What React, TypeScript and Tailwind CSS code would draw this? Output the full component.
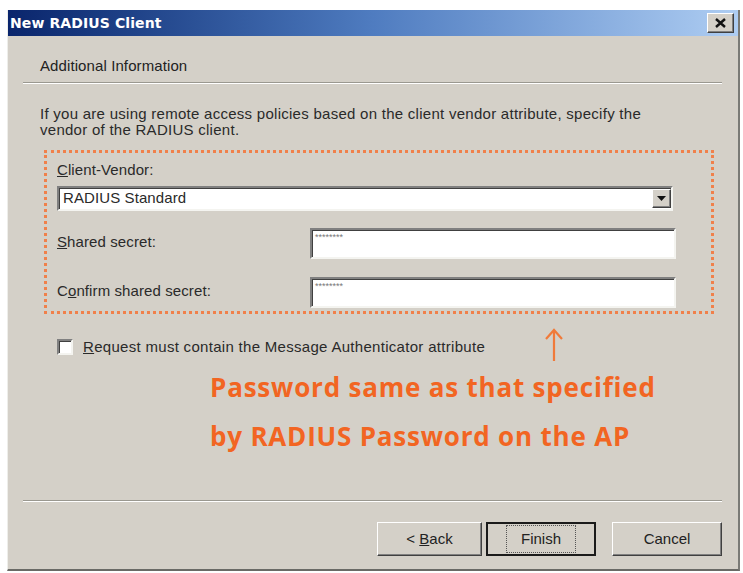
import { useState } from "react";

const sunken =
  "border-2 border-t-[#808080] border-l-[#808080] border-b-[#f4f4f0] border-r-[#f4f4f0] shadow-[inset_1px_1px_0_#404040]";

const raised =
  "border border-t-[#ffffff] border-l-[#ffffff] border-b-[#404040] border-r-[#404040] shadow-[inset_-1px_-1px_0_#808080]";

function Separator({ className = "" }: { className?: string }) {
  return <div className={`h-[2px] border-t border-t-[#9a9890] border-b border-b-[#ffffff] ${className}`} />;
}

function Button({ label, width, focused }: { label: React.ReactNode; width: string; focused?: boolean }) {
  return (
    <button
      className={`${width} h-[34px] bg-[#d4d0c8] text-[15px] text-[#222] ${
        focused ? "border-2 border-[#1a1a1a]" : raised
      } flex items-center justify-center`}
    >
      <span className={focused ? "border border-dotted border-[#555] px-[14px] py-[2px]" : ""}>{label}</span>
    </button>
  );
}

export default function App() {
  const [checked, setChecked] = useState(false);

  return (
    <div className="w-[743px] h-[573px] bg-white overflow-hidden font-['Liberation_Sans',Arial,sans-serif]">
      <div className="ml-[7px] mt-[10px] w-[733px] h-[561px] bg-[#d4d0c8] border-l border-l-[#eeeeea] border-r-2 border-r-[#7a7a76] border-b-2 border-b-[#6a6a66] flex flex-col">
        {/* Title bar */}
        <div className="h-[26px] bg-gradient-to-r from-[#0a256c] via-[#4f7cc0] to-[#aecdf2] flex items-center justify-between pl-[2px] pr-[4px]">
          <span className="text-white font-bold text-[14px] tracking-[0.1px] font-['DejaVu_Sans',sans-serif]">
            New RADIUS Client
          </span>
          <div className={`w-[27px] h-[20px] bg-[#d4d0c8] ${raised} flex items-center justify-center`}>
            <svg width="11" height="10" viewBox="0 0 11 10">
              <path d="M1 1 L10 9 M10 1 L1 9" stroke="#111" strokeWidth="2.4" />
            </svg>
          </div>
        </div>

        {/* Header */}
        <div className="h-[46px] pl-[32px] pt-[19px] text-[15px] text-[#222] tracking-[0.1px]">Additional Information</div>
        <Separator className="ml-[15px] mr-[16px]" />

        {/* Body */}
        <div className="pl-[32px] pt-[22px] text-[15px] text-[#2a2a2a] leading-[16px] tracking-[0.27px]">
          <p>If you are using remote access policies based on the client vendor attribute, specify the</p>
          <p>vendor of the RADIUS client.</p>
        </div>

        <div className="ml-[36px] mt-[12px] w-[670px] h-[164px] border-[3px] border-dotted border-[#f0804a] pl-[10px] pr-[38px] pt-[8px] text-[15px] text-[#2a2a2a] tracking-[0.1px]">
          <div className="h-[18px] leading-[18px]">
            <u>C</u>lient-Vendor:
          </div>
          <div className={`mt-[7px] h-[25px] bg-white ${sunken} flex items-center justify-between pl-[4px]`}>
            <span>RADIUS Standard</span>
            <div className={`w-[19px] h-[19px] bg-[#d4d0c8] ${raised} flex items-center justify-center`}>
              <svg width="9" height="5" viewBox="0 0 9 5">
                <path d="M0 0 H9 L4.5 5 Z" fill="#111" />
              </svg>
            </div>
          </div>
          <div className="mt-[17px] mr-[-3px] flex items-start justify-between">
            <span className="pt-[3px]">
              <u>S</u>hared secret:
            </span>
            <div className={`w-[366px] h-[31px] bg-white ${sunken} pl-[3px] text-[9px] leading-[14px] text-[#777] tracking-[0px]`}>
              ********
            </div>
          </div>
          <div className="mt-[18px] mr-[-3px] flex items-start justify-between">
            <span className="pt-[3px]">
              C<u>o</u>nfirm shared secret:
            </span>
            <div className={`w-[366px] h-[31px] bg-white ${sunken} pl-[3px] text-[9px] leading-[14px] text-[#777] tracking-[0px]`}>
              ********
            </div>
          </div>
        </div>

        {/* Checkbox row + annotation arrow */}
        <div className="relative pt-[22px]">
          <label className="ml-[49px] flex items-center gap-[10px] text-[15px] text-[#2a2a2a] tracking-[0.3px]">
            <input
              type="checkbox"
              checked={checked}
              onChange={(e) => setChecked(e.target.checked)}
              className={`appearance-none w-[16px] h-[16px] bg-white ${sunken}`}
            />
            <span>
              <u>R</u>equest must contain the Message Authenticator attribute
            </span>
          </label>
          <svg className="absolute left-[536px] top-[14px]" width="20" height="34" viewBox="0 0 20 34">
            <path d="M10 33 V2 M2 11 L10 2 L18 11" stroke="#f07a3a" strokeWidth="2.2" fill="none" />
          </svg>
        </div>

        <div className="ml-[202px] mt-[4px] text-[#f26522] font-bold text-[26px] leading-[49px] font-['Open_Sans',sans-serif] tracking-[0.8px]">
          <p>Password same as that specified</p>
          <p>by RADIUS Password on the AP</p>
        </div>

        <Separator className="ml-[15px] mr-[16px] mt-auto" />

        <div className="mt-[20px] mb-[13px] flex justify-end pr-[16px]">
          <Button
            width="w-[105px]"
            label={
              <>
                &lt; <u>B</u>ack
              </>
            }
          />
          <div className="w-[4px]" />
          <Button width="w-[110px]" label="Finish" focused />
          <div className="w-[16px]" />
          <Button width="w-[110px]" label="Cancel" />
        </div>
      </div>
    </div>
  );
}
